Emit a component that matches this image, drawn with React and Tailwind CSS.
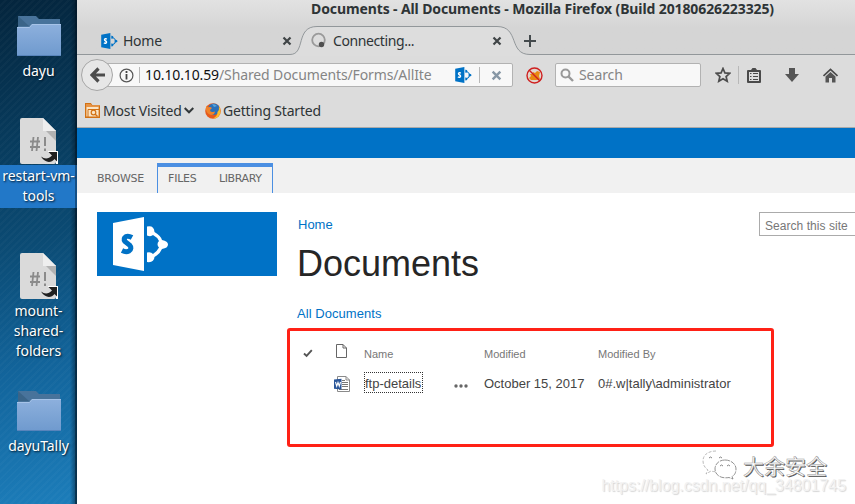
const ui = "font-['Noto_Sans','Open_Sans',sans-serif]";
const web = "font-['Liberation_Sans',Arial,sans-serif]";

function Folder() {
  return (
    <svg width="44" height="40" viewBox="0 0 44 40" className="block">
      <defs>
        <linearGradient id="folder" x1="0" y1="0" x2="0" y2="1">
          <stop offset="0" stopColor="#8db0dd" />
          <stop offset="1" stopColor="#6f9ace" />
        </linearGradient>
      </defs>
      <path d="M1 0H19L22 3H43V14H1Z" fill="#48739b" />
      <path d="M1 0 12 10H1Z" fill="#3a6488" />
      <path d="M0 11H12.500L15 8H44V40H0Z" fill="url(#folder)" />
      <path d="M0 11.500H12.500L15 8.500H44" fill="none" stroke="#a6c3e8" />
      <path d="M0 39.500H44" stroke="#5884bb" />
    </svg>
  );
}

function Script() {
  return (
    <svg width="38" height="46" viewBox="0 0 38 46" className="block">
      <path d="M2 0H23L36 13V44Q36 46 34 46H2Q0 46 0 44V2Q0 0 2 0Z" fill="#dadada" />
      <path d="M25 12H36V23Z" fill="#b2b2b2" />
      <path d="M23 0 36 13H23Z" fill="#eeeeee" />
      <path d="M10 23.500H20M10 29H20M13.500 19 12 33M18 19 16.500 33" stroke="#8b8b8b" strokeWidth="1.800" />
      <path d="M25 19V28M25 30.500V33" stroke="#8b8b8b" strokeWidth="2" />
      <path d="M28 33H38V46H36V34H28Z" fill="#fff" />
      <path d="M28.500 34H37V43.500L34.500 41C31 45.500 25 45 21 38.500C25 41.500 28.500 41 32 37.500Z" fill="#202020" />
    </svg>
  );
}

function SharePoint({ className, fg, letter }) {
  return (
    <svg viewBox="0 0 56 54" className={className}>
      <path d="M0 6 31 0V54L0 48Z" fill={fg} />
      <path d="M19 20.500Q15.500 18.500 13 19.500Q10 21.500 12 24.500L16.500 28Q19.500 31.500 16 34Q13 35.500 9 33.500" fill="none" stroke={letter} strokeWidth="5" />
      <path d="M34 9.500Q41 8 41.500 15Q48 19 49 23Q55 24 55 27.500Q55 31 49 32Q47 37 41.500 40Q41 46 34 45V35.500Q38 34.500 40 37Q44 34.500 46 30.500Q43 27 46 24Q44 20 40 18Q38 20 34 18.500Z" fill={fg} />
    </svg>
  );
}

function DesktopItem({ children, lines, selected, className }) {
  return (
    <div className={`flex flex-col items-center ${className}`}>
      {children}
      <div className={`w-[77px] text-center text-[14px] leading-5 text-white [text-shadow:1px_1px_2px_#001525] ${selected ? "mt-px h-[43px] bg-[#2278c8] pt-px" : "pt-px"}`}>
        {lines.map((l) => (
          <div key={l} className="whitespace-nowrap tracking-[-0.05px]">{l}</div>
        ))}
      </div>
    </div>
  );
}

function Desktop() {
  return (
    <aside className="relative h-[504px] w-[77px] shrink-0 overflow-hidden bg-[linear-gradient(168deg,#04253d_0%,#07395a_25%,#0b4b74_48%,#12649b_72%,#1c7dba_100%)] pt-4">
      <div className="absolute inset-0 bg-[repeating-linear-gradient(135deg,transparent_0px,transparent_3px,rgba(255,255,255,0.025)_3px,rgba(255,255,255,0.025)_5px)]" />
      <div className="absolute inset-y-0 right-0 w-[7px] bg-linear-to-r from-transparent to-[#001220]/55" />
      <div className="relative">
        <DesktopItem lines={["dayu"]} className="h-[102px] [&>div]:pt-[5px]"><Folder /></DesktopItem>
        <DesktopItem lines={["restart-vm-", "tools"]} selected className="h-[135px]"><Script /></DesktopItem>
        <DesktopItem lines={["mount-", "shared-", "folders"]} className="h-[138px] [&>div]:pt-[2px]"><Script /></DesktopItem>
        <DesktopItem lines={["dayuTally"]} className="[&>div]:pt-[5px]"><Folder /></DesktopItem>
      </div>
      <div className="absolute inset-y-0 right-0 w-[2px] bg-[#001220]/40" />
    </aside>
  );
}

function Cross({ color, size }) {
  return (
    <svg width={size} height={size} viewBox="0 0 10 10">
      <path d="M1.500 1.500 8.500 8.500M8.500 1.500 1.500 8.500" stroke={color} strokeWidth="2.200" />
    </svg>
  );
}

function Tabs() {
  return (
    <div className="relative flex h-[30px] items-center pb-px text-[14px] text-[#2e3436]">
      <svg className="absolute inset-0" width="778" height="30" viewBox="0 0 778 30">
        <path d="M0 28.500H213C229 28.500 218 .5 240 .5H420C443 .5 431 28.500 453 28.500H778V30H0Z" fill="#dddddd" />
        <path d="M0 28.500H213C229 28.500 218 .5 240 .5H420C443 .5 431 28.500 453 28.500H778" fill="none" stroke="#92979a" />
      </svg>
      <div className="relative flex w-[233px] items-center pl-6">
        <SharePoint className="h-4 w-[17px]" fg="#0072c6" letter="#fff" />
        <span className="ml-[5px] grow tracking-[-0.25px]">Home</span>
        <span className="mr-[18px]"><Cross color="#3f4446" size={10} /></span>
      </div>
      <div className="relative flex w-[200px] items-center">
        <svg width="17" height="17" viewBox="0 0 17 17">
          <circle cx="8.500" cy="8" r="6.300" fill="none" stroke="#9a9a9a" strokeWidth="1.800" />
          <circle cx="11.500" cy="12.500" r="2.700" fill="#505050" />
        </svg>
        <span className="ml-[6px] grow tracking-[-0.4px]">Connecting...</span>
        <span className="mr-[8px]"><Cross color="#3f4446" size={10} /></span>
      </div>
      <svg className="relative ml-[14px]" width="12" height="12" viewBox="0 0 12 12">
        <path d="M6 0V12M0 6H12" stroke="#444a4d" strokeWidth="2" />
      </svg>
    </div>
  );
}

function NavBar() {
  return (
    <div className="flex h-[38px] items-center pl-1 text-[14px] text-[#858585]">
      <div className="z-10 flex size-8 shrink-0 items-center justify-center rounded-full border border-[#a6a6a6] bg-[#e7e7e7]">
        <svg width="15" height="16" viewBox="0 0 15 16">
          <path d="M15 8H3M8.500 1.500 2 8 8.500 14.500" fill="none" stroke="#4c4c4c" strokeWidth="3.200" />
        </svg>
      </div>
      <div className="-ml-2 flex h-6 w-[408px] items-center rounded-r-[2px] border border-[#b2b2b2] bg-[#f8f8f8] pl-[13px]">
        <svg width="15" height="15" viewBox="0 0 15 15">
          <circle cx="7.500" cy="7.500" r="6.400" fill="none" stroke="#555" strokeWidth="1.200" />
          <path d="M7.500 3V5M7.500 6V11.500" stroke="#444" strokeWidth="1.800" />
        </svg>
        <span className="ml-[5px] h-4 w-px bg-[#b8b8b8]" />
        <span className="-mt-px ml-[5px] w-[310px] whitespace-nowrap tracking-[-0.12px]"><span className="text-[#101010]">10.10.10.59</span>/Shared Documents/Forms/AllIte</span>
        <SharePoint className="h-4 w-[17px] shrink-0" fg="#0072c6" letter="#fff" />
        <span className="ml-[7px] h-4 w-px shrink-0 bg-[#b8b8b8]" />
        <span className="ml-[11px] shrink-0"><Cross color="#8797a5" size={11} /></span>
      </div>
      <svg className="ml-[13px] shrink-0" width="17" height="17" viewBox="0 0 17 17">
        <circle cx="8.500" cy="8.500" r="7.300" fill="#e2d6ce" />
        <path d="M4 7 6 7 7 5 9 6 11 4 14 5 13 9 14 12 11 13 5 13 3 11 5 9Z" fill="#e98912" />
        <circle cx="8.500" cy="8.500" r="7.500" fill="none" stroke="#cf2020" strokeWidth="1.400" />
        <path d="M3 3 14 14" stroke="#cf2020" strokeWidth="1.400" />
      </svg>
      <div className="ml-3 flex h-6 w-[146px] shrink-0 items-center rounded-[2px] border border-[#b2b2b2] bg-[#f8f8f8] pl-1">
        <svg width="14" height="14" viewBox="0 0 14 14">
          <circle cx="5.500" cy="5.500" r="4" fill="none" stroke="#999" strokeWidth="2" />
          <path d="M8.500 8.500 13 13" stroke="#999" strokeWidth="2.400" />
        </svg>
        <span className="-mt-px ml-[5px] tracking-[-0.1px]">Search</span>
      </div>
      <svg className="ml-[14px] shrink-0" width="16" height="16" viewBox="0 0 16 16">
        <path d="M8 1.500 9.900 5.900 14.700 6.300 11.100 9.500 12.200 14.200 8 11.700 3.800 14.200 4.900 9.500 1.300 6.300 6.100 5.900Z" fill="none" stroke="#4c4c4c" strokeWidth="1.700" />
      </svg>
      <span className="ml-[7px] h-[18px] w-px bg-[#b8b8b8]" />
      <svg className="ml-2 shrink-0" width="14" height="15" viewBox="0 0 14 15">
        <path d="M0 3Q0 2 1 2H4L5.500 0H8.500L10 2H13Q14 2 14 3V14Q14 15 13 15H1Q0 15 0 14Z" fill="#4a4a4a" />
        <path d="M2 4H12V13H2Z" fill="#ddd" />
        <path d="M3 5.500H4.500M6 5.500H11M3 8.500H4.500M6 8.500H11M3 11.500H4.500M6 11.500H11" stroke="#4a4a4a" />
      </svg>
      <svg className="ml-6 shrink-0" width="14" height="14" viewBox="0 0 14 14">
        <path d="M4 0H10V6H14L7 14 0 6H4Z" fill="#555" />
      </svg>
      <svg className="ml-6 shrink-0" width="15" height="15" viewBox="0 0 15 15">
        <path d="M.5 8 7.500 1.500 14.500 8" fill="none" stroke="#4a4a4a" strokeWidth="1.700" />
        <path d="M2.500 8.500 7.500 4 12.500 8.500V14.500H9V10H6V14.500H2.500Z" fill="#555" />
      </svg>
    </div>
  );
}

function Bookmarks() {
  return (
    <div className="flex h-[34px] items-center border-b border-[#aaa] pl-2 text-[14px] text-[#2e3436]">
      <svg width="15" height="15" viewBox="0 0 15 15">
        <path d="M.7 14.300V.7H5.500L7 3H14.300V14.300Z" fill="#fae5c6" stroke="#d27114" strokeWidth="1.400" />
        <path d="M1 4H14V2.500H7L5.500 1H1Z" fill="#e89445" />
        <path d="M3 14V6.500H14" fill="none" stroke="#d27114" />
        <circle cx="8.500" cy="9.500" r="2.300" fill="none" stroke="#d27114" strokeWidth="1.200" />
        <path d="M10 11 12.500 13.500" stroke="#d27114" strokeWidth="1.400" />
      </svg>
      <span className="ml-[3px] w-[80px] whitespace-nowrap tracking-[-0.15px]">Most Visited</span>
      <svg className="ml-px" width="10" height="7" viewBox="0 0 10 7">
        <path d="M.7 1 5 5.300 9.300 1" fill="none" stroke="#33383a" strokeWidth="2" />
      </svg>
      <svg className="ml-[11px]" width="16" height="16" viewBox="0 0 16 16">
        <circle cx="8" cy="8" r="7.800" fill="#e65a1c" />
        <circle cx="8.800" cy="6.200" r="5.800" fill="#2c70b8" />
        <path d="M14 3Q16 6 15.500 10Q13.500 15.500 8 15.500Q12.500 13 12.500 9Q14.500 7 14 3Z" fill="#fbbd2c" />
        <path d="M1 3 3.500 4.200Q5.500 3.500 7 5L5 7Q5 9.500 8 9L10 8.500Q9.500 12 6 12Q2 11 1 7Z" fill="#f0832a" />
        <path d="M7 1Q10 1 12 3L9 4Z" fill="#56a5dc" />
      </svg>
      <span className="ml-[2px] whitespace-nowrap tracking-[-0.18px]">Getting Started</span>
    </div>
  );
}

function Ribbon() {
  return (
    <div className="flex h-[35px] bg-[#f1f1f1] pl-5 pt-[5px] font-['DejaVu_Sans','Noto_Sans',sans-serif] text-[11px] text-[#666]">
      <span className="w-[60px] pt-[9px] leading-[13px] tracking-[-0.3px]">BROWSE</span>
      <div className="flex h-[30px] w-[116px] border-x border-t-4 border-[#4b8fe2] pl-[10px] pt-[5px] leading-[13px]">
        <span className="w-[51px] tracking-[-0.2px]">FILES</span>
        <span className="tracking-[-0.4px]">LIBRARY</span>
      </div>
    </div>
  );
}

function WordIcon() {
  return (
    <svg width="16" height="16" viewBox="0 0 16 16" className="block">
      <path d="M3.500.5H12L15.500 4V15.500H3.500Z" fill="#fff" stroke="#8a8a8a" />
      <path d="M12 .5V4H15.500" fill="none" stroke="#8a8a8a" />
      <path d="M8 4.500H11M8 6.500H14M8 8.500H14M8 10.500H14M5 13.500H14" stroke="#777" />
      <path d="M0 3.500 7.500 2.800V13.500L0 12.800Z" fill="#2a5699" />
      <path d="M1.500 6 2.700 10.200 4 6.500 5.300 10.200 6.500 6" fill="none" stroke="#fff" strokeWidth="1.100" />
    </svg>
  );
}

function Listing() {
  return (
    <section className={`h-[119px] w-[487px] rounded-[3px] border-[3px] border-[#ff2116] ${web}`}>
      <div className="flex h-[40px] items-center pl-[13px] text-[11px] text-[#777]">
        <svg className="mt-1" width="10" height="9" viewBox="0 0 10 9">
          <path d="M1 4.500 3.600 7 8.800 1.200" fill="none" stroke="#555" strokeWidth="1.900" />
        </svg>
        <svg className="ml-[23px]" width="11" height="14" viewBox="0 0 11 14">
          <path d="M.5.5H7L10.500 4V13.500H.5ZM7 .5V4H10.500" fill="none" stroke="#666" />
        </svg>
        <span className="ml-[17px] mt-[7px] w-[120px]">Name</span>
        <span className="mt-[7px] w-[114px]">Modified</span>
        <span className="mt-[7px]">Modified By</span>
      </div>
      <div className="flex h-[23px] items-center pl-11 text-[13px] text-[#444]">
        <span className="mt-[2px]"><WordIcon /></span>
        <div className="ml-[14px] w-[90px]">
          <span className="block h-[21px] w-[59px] whitespace-nowrap outline-1 -outline-offset-1 outline-dotted outline-[#333] pl-px leading-[23px]">ftp-details</span>
        </div>
        <svg className="mt-[6px]" width="14" height="4" viewBox="0 0 14 4">
          <circle cx="2" cy="2" r="1.700" fill="#666" /><circle cx="7" cy="2" r="1.700" fill="#666" /><circle cx="12" cy="2" r="1.700" fill="#666" />
        </svg>
        <span className="ml-4 mt-[3px] w-[114px] whitespace-nowrap">October 15, 2017</span>
        <span className="mt-[3px] whitespace-nowrap">0#.w|tally\administrator</span>
      </div>
    </section>
  );
}

function Watermark() {
  return (
    <div className="absolute right-[9px] bottom-[9px] flex flex-col items-end">
      <div className="mr-[19px] flex items-center">
        <svg width="36" height="30" viewBox="0 0 36 30" fill="#fff" stroke="#aaa" strokeWidth=".8">
          <path d="M14 1C6 1 1 5 1 11C1 15 3 18 6 20L4 24 9 21Q12 22 15 21.500" strokeDasharray="3 1.500" />
          <path d="M23 10C29 10 34 14 34 19C34 22 33 25 30 26.500L31 29 27 27.500C19 29 13 25 13 19C13 14 17 10 23 10Z" stroke="#777" strokeDasharray="5 1" />
          <path d="M7 8Q8.500 6 10 8M17 8Q18.500 6 20 8M18 16Q19.500 14 21 16M25 16Q26.500 14 28 16" fill="none" stroke="#666" />
        </svg>
        <span className="ml-[5px] font-['Noto_Sans_CJK_SC',sans-serif] text-[21px] leading-[30px] text-white [-webkit-text-stroke:0.5px_#999] [text-shadow:1px_1px_0_#555]">大余安全</span>
      </div>
      <div className={`-mt-[3px] whitespace-nowrap text-[16px] leading-[18px] tracking-[-0.03px] text-[#f2f2f2] [text-shadow:1px_1px_1px_#d6d6d6] ${web}`}>https://blog.csdn.net/qq_34801745</div>
    </div>
  );
}

function Page() {
  return (
    <main className={`flex h-[311px] pl-5 pt-[19px] ${web}`}>
      <div className="h-16 w-[180px] shrink-0 bg-[#0072c6] pl-4 pt-[5px]">
        <SharePoint className="h-[54px] w-[56px]" fg="#fff" letter="#0072c6" />
      </div>
      <div className="ml-[10px] w-[487px] shrink-0">
        <div className="flex h-[116px] flex-col pl-[11px]">
          <a className="pt-[5px] text-[13px] leading-4 text-[#0072c6]">Home</a>
          <h1 className="-ml-px mt-[9px] h-[44px] text-[36px] leading-[44px] text-[#262626]">Documents</h1>
          <a className="-ml-px mt-[20px] text-[13px] leading-4 tracking-[0.05px] text-[#0072c6]">All Documents</a>
        </div>
        <Listing />
      </div>
      <div className="-ml-[15px] h-6 w-[110px] shrink-0 border border-[#ababab] pl-[5px] pt-[2px] text-[12px] leading-[22px] tracking-[0.05px] text-[#777]">Search this site</div>
    </main>
  );
}

export default function App() {
  return (
    <div className={`relative flex h-[504px] w-[855px] overflow-hidden bg-white ${ui}`}>
      <Desktop />
      <div className="w-[778px] shrink-0 overflow-hidden bg-white">
        <header className="bg-[#dcdcdc]">
          <div className="bg-linear-to-b from-[#e2e2e2] to-[#d5d5d5] to-50%">
            <div className="h-[26px] pl-[234px] text-[14px] leading-[18px] font-bold tracking-[-0.11px] whitespace-nowrap text-[#2e3436]">Documents - All Documents - Mozilla Firefox (Build 20180626223325)</div>
            <Tabs />
          </div>
          <NavBar />
          <Bookmarks />
        </header>
        <div className="h-[30px] bg-[#0072c6]" />
        <Ribbon />
        <Page />
      </div>
      <Watermark />
    </div>
  );
}
